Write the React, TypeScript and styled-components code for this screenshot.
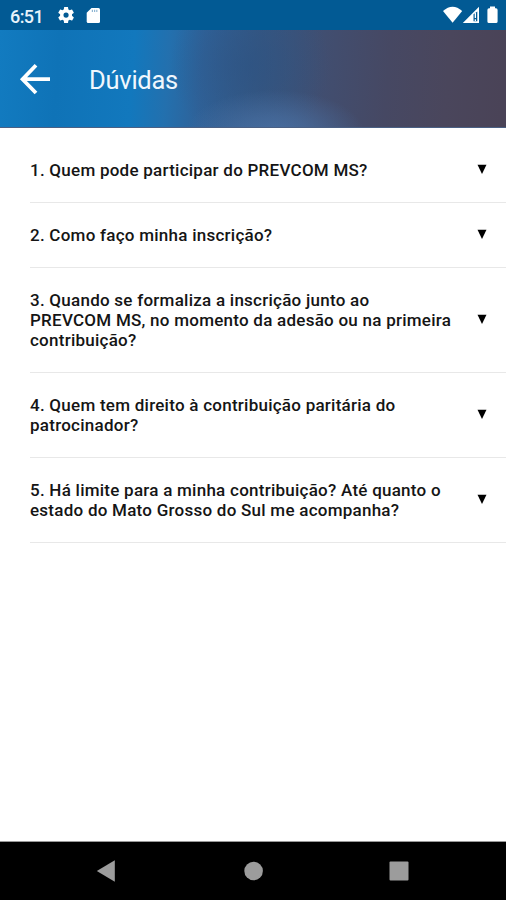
import React from "react";
import styled, { createGlobalStyle } from "styled-components";

const GlobalStyle = createGlobalStyle`
  *, *::before, *::after { box-sizing: border-box; }
  body { margin: 0; background: #fff; font-family: Roboto, "Liberation Sans", sans-serif; }
`;

const Screen = styled.div`
  display: flex;
  flex-direction: column;
  width: 506px;
  height: 900px;
  background: #fff;
  overflow: hidden;
`;

const StatusBar = styled.header`
  display: flex;
  align-items: center;
  height: 30px;
  flex: none;
  background: #025a94;
  color: #e8f3fb;
`;

const Clock = styled.span`
  width: 47px;
  margin-left: 10px;
  padding-top: 3px;
  font-size: 18px;
  font-weight: 500;
  line-height: 20px;
  letter-spacing: -0.6px;
`;

const StatusIcon = styled.svg<{ $w: number }>`
  display: block;
  flex: none;
  width: ${(p) => p.$w}px;
  height: 30px;
  fill: #fff;
`;

const Spacer = styled.div`
  flex: 1;
`;

const AppBar = styled.div`
  display: flex;
  align-items: center;
  height: 98px;
  flex: none;
  border-bottom: 1px solid #4a6084;
  background:
    radial-gradient(ellipse 90px 44px at 275px 104px, rgba(76, 116, 168, 0.8), rgba(76, 116, 168, 0.55) 40%, rgba(76, 116, 168, 0) 100%),
    radial-gradient(ellipse 80px 80px at 250px 35px, rgba(44, 82, 130, 0.6), rgba(44, 82, 130, 0) 100%),
    linear-gradient(94deg, #127bc0 0, #0f73b7 60px, #1278bd 135px, #2370ae 170px, #2f6299 205px, #365782 260px, #414e70 325px, #464863 390px, #4a465c 450px, #4a4357 506px);
`;

const BackButton = styled.button`
  display: flex;
  width: 32px;
  height: 32px;
  margin-left: 19px;
  padding: 0;
  border: 0;
  background: none;
`;

const Title = styled.h1`
  margin: 3px 0 0 38px;
  font-size: 25.5px;
  line-height: 32px;
  font-weight: 400;
  letter-spacing: -0.25px;
  color: #f0f7fd;
`;

const QuestionList = styled.main`
  flex: 1;
  padding-top: 10px;
`;

const QuestionRow = styled.div`
  display: flex;
  align-items: center;
  justify-content: space-between;
  margin-left: 30px;
  padding: 22px 18px 22px 0;
  border-bottom: 1px solid #e8e8e8;

  &:first-child {
    padding-bottom: 21.5px;
  }
`;

const Question = styled.span`
  white-space: pre-line;
  font-size: 17px;
  line-height: 20px;
  font-weight: 500;
  letter-spacing: 0.25px;
  color: #151515;
`;

const Arrow = styled.svg`
  display: block;
  flex: none;
  width: 12px;
  height: 12px;
  margin-bottom: 2px;
`;

const NavBar = styled.nav`
  display: flex;
  align-items: center;
  height: 59px;
  flex: none;
  padding-left: 96px;
  border-top: 1px solid #999;
  background: #000;
`;

const NavIcon = styled.svg<{ $gap: number }>`
  display: block;
  width: 20px;
  height: 22px;
  margin-right: ${(p) => p.$gap}px;
  fill: #9c9c9c;
`;

const QUESTIONS = [
  "1. Quem pode participar do PREVCOM MS?",
  "2. Como faço minha inscrição?",
  "3. Quando se formaliza a inscrição junto ao\nPREVCOM MS, no momento da adesão ou na primeira\ncontribuição?",
  "4. Quem tem direito à contribuição paritária do\npatrocinador?",
  "5. Há limite para a minha contribuição? Até quanto o\nestado do Mato Grosso do Sul me acompanha?",
];

export default function App() {
  return (
    <Screen>
      <GlobalStyle />
      <StatusBar>
        <Clock>6:51</Clock>
        <StatusIcon $w={28} viewBox="0 0 28 30">
          <g transform="translate(-.9 5.1) scale(.83)">
            <path d="M19.14 12.94c.04-.3.06-.61.06-.94 0-.32-.02-.64-.07-.94l2.03-1.58c.18-.14.23-.41.12-.61l-1.92-3.32c-.12-.22-.37-.29-.59-.22l-2.39.96c-.5-.38-1.03-.7-1.62-.94l-.36-2.54c-.04-.24-.24-.41-.48-.41h-3.84c-.24 0-.43.17-.47.41l-.36 2.54c-.59.24-1.13.57-1.62.94l-2.39-.96c-.22-.08-.47 0-.59.22L2.74 8.87c-.12.21-.08.47.12.61l2.03 1.58c-.05.3-.09.63-.09.94s.02.64.07.94l-2.03 1.58c-.18.14-.23.41-.12.61l1.92 3.32c.12.22.37.29.59.22l2.39-.96c.5.38 1.03.7 1.62.94l.36 2.54c.05.24.24.41.48.41h3.84c.24 0 .44-.17.47-.41l.36-2.54c.59-.24 1.13-.56 1.62-.94l2.39.96c.22.08.47 0 .59-.22l1.92-3.32c.12-.22.07-.47-.12-.61l-2.01-1.58zM12 15.1a3.1 3.1 0 1 1 0-6.2 3.1 3.1 0 0 1 0 6.2z" />
          </g>
        </StatusIcon>
        <StatusIcon $w={18} viewBox="0 0 18 30">
          <path d="M6.500 8H13.500Q15 8 15 9.500V21.500Q15 23 13.500 23H3.200Q1.700 23 1.700 21.500V12.700Z" />
          <path d="M6.800 9.800H8V12H6.800ZM9 9.800H10.200V12H9ZM11.200 9.800H12.400V12H11.200Z" fill="#8fb6d3" />
        </StatusIcon>
        <Spacer />
        <StatusIcon $w={66} viewBox="440 0 66 30">
          <path d="M443 11Q452.600 2.500 462.200 11L452.600 22.700Z" />
          <path fillRule="evenodd" d="M462.800 23L479 6.700V23ZM473.500 14.200V21.300H477.300V11.500Z" />
          <path d="M474.700 13H476V18H474.700ZM474.700 19.300H476V21H474.700Z" />
          <path d="M490 6.500H495V8.300H496Q497.600 8.300 497.600 9.900V21.500Q497.600 23 496 23H489Q487.400 23 487.400 21.500V9.900Q487.400 8.300 489 8.300H490Z" />
        </StatusIcon>
      </StatusBar>
      <AppBar>
        <BackButton aria-label="Voltar">
          <svg width="32" height="32" viewBox="0 0 32 32" fill="none" stroke="#fff" strokeWidth="3.8">
            <path d="M31 16.200H4M17 2.300L3.600 16.200L17 30" />
          </svg>
        </BackButton>
        <Title>Dúvidas</Title>
      </AppBar>
      <QuestionList>
        {QUESTIONS.map((q) => (
          <QuestionRow key={q}>
            <Question>{q}</Question>
            <Arrow viewBox="0 0 12 12">
              <path d="M1.500 1.700H10.500L6 11Z" fill="#000" />
            </Arrow>
          </QuestionRow>
        ))}
      </QuestionList>
      <NavBar>
        <NavIcon $gap={128} viewBox="0 0 20 22">
          <path d="M.8 11L18.800 .3V21.700Z" />
        </NavIcon>
        <NavIcon $gap={125} viewBox="0 0 20 22">
          <circle cx="9.600" cy="11" r="9.300" />
        </NavIcon>
        <NavIcon $gap={0} viewBox="0 0 20 22">
          <rect x=".5" y="1.500" width="19" height="19" rx="1" />
        </NavIcon>
      </NavBar>
    </Screen>
  );
}
